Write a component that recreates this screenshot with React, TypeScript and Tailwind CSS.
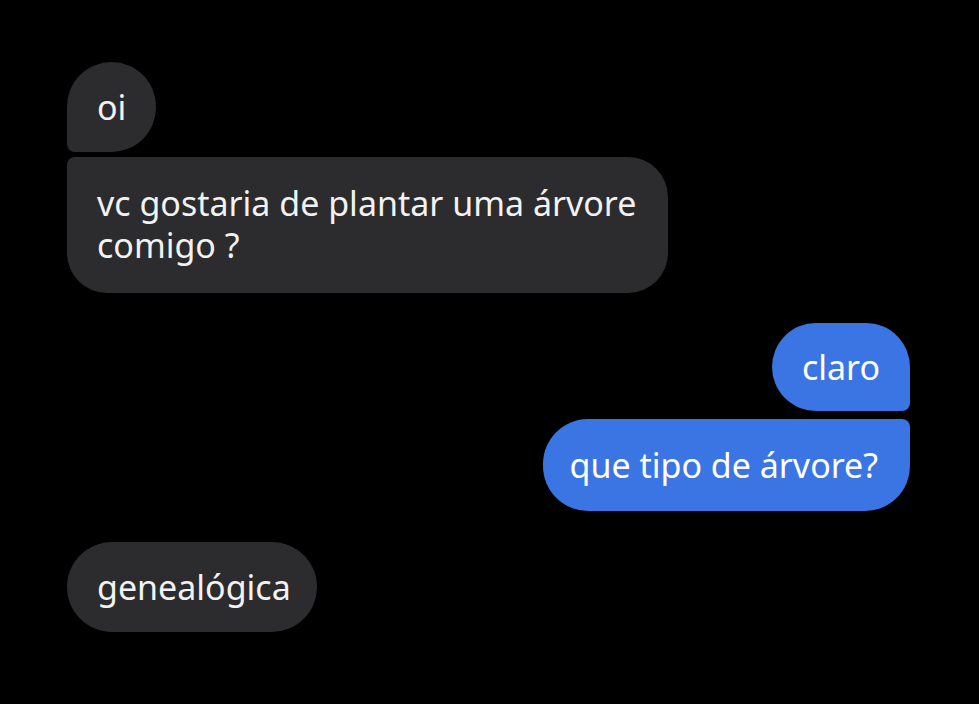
import React from 'react';

const Chat = () => {
  return (
    <div
      className="min-h-screen w-full bg-black pl-[67px] pr-[69px] pt-[62px] text-[34px] leading-[42px] text-[#f2f2f2]"
      style={{ fontFamily: '"Noto Sans", "Open Sans", sans-serif' }}
    >
      {/* received */}
      <div className="flex flex-col items-start gap-[5px]">
        <div className="rounded-[45px] rounded-bl-[8px] bg-[#2c2b2d] px-[30px] py-[24px]">oi</div>
        <div className="rounded-[40px] rounded-tl-[8px] bg-[#2c2b2d] pl-[30px] pr-[32px] pt-[25px] pb-[27px]">
          vc gostaria de plantar uma árvore
          <br />
          comigo ?
        </div>
      </div>

      {/* sent */}
      <div className="mt-[30px] flex flex-col items-end gap-[8px]">
        <div className="rounded-[44px] rounded-br-[8px] bg-[#3b75e3] px-[30px] py-[23px] text-white">claro</div>
        <div className="rounded-[45px] rounded-tr-[8px] bg-[#3b75e3] pl-[27px] pr-[32px] py-[25px] text-white">que tipo de árvore?</div>
      </div>

      <div className="mt-[31px] flex">
        <div className="rounded-[45px] bg-[#2c2b2d] pl-[30px] pr-[26px] py-[24px]">genealógica</div>
      </div>
    </div>
  );
};

export default function App() {
  return <Chat />;
}
